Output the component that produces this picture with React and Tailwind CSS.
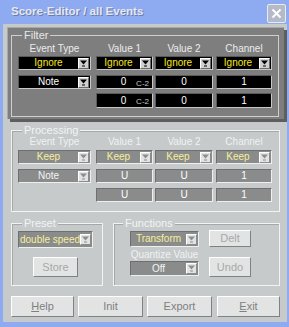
import React from 'react';

const font = "font-['Liberation_Sans',Arial,sans-serif]";

// column widths / gaps shared by the two grids
const cols = ['w-[73px]', 'ml-[5px] w-[57px]', 'ml-[2px] w-[58px]', 'ml-[3px] w-[56px]'];

function Arrow({ dim }) {
  return (
    <span
      className={
        dim
          ? 'mr-[1px] flex h-[11px] w-[11px] shrink-0 items-center justify-center border border-t-white border-l-white border-b-[#8a8c8c] border-r-[#8a8c8c] bg-[#e2e4e4]'
          : 'mr-[1px] flex h-[11px] w-[11px] shrink-0 items-center justify-center border border-t-white border-l-white border-b-[#6a6a6a] border-r-[#6a6a6a] bg-[#d0d0d0]'
      }
    >
      <svg width="7" height="7" viewBox="0 0 7 7">
        <path d="M0 0.5h7L3.5 4.5z" fill={dim ? '#8c8e8e' : '#000'} />
        <rect x="2" y="5.5" width="3" height="1" fill={dim ? '#8c8e8e' : '#000'} />
      </svg>
    </span>
  );
}

function Drop({ text, dark, yellow, left, h = 'h-[14px]' }) {
  const box = dark
    ? 'flex items-center bg-black border border-t-[#5a5a5a] border-l-[#5a5a5a] border-b-[#c8c8c8] border-r-[#c8c8c8]'
    : 'flex items-center bg-[#8a8c8c] border border-t-[#6e7070] border-l-[#6e7070] border-b-[#eef0f0] border-r-[#eef0f0]';
  const color = dark
    ? yellow ? 'text-[#f8e81c]' : 'text-white'
    : yellow ? 'text-[#f6ee9a]' : 'text-[#f2f4f4]';
  return (
    <div className={`${box} ${h}`}>
      <span
        className={`flex-1 whitespace-nowrap text-[10px] leading-none ${color} ${
          left ? 'pl-[1px] text-left' : 'text-center'
        }`}
      >
        {text}
      </span>
      <Arrow dim={!dark} />
    </div>
  );
}

function Num({ text, dark, note, h = 'h-[14px]' }) {
  const box = dark
    ? 'flex items-center bg-black border border-t-[#5a5a5a] border-l-[#5a5a5a] border-b-[#c8c8c8] border-r-[#c8c8c8]'
    : 'flex items-center bg-[#8a8c8c] border border-t-[#6e7070] border-l-[#6e7070] border-b-[#eef0f0] border-r-[#eef0f0]';
  return (
    <div className={`${box} ${h}`}>
      <span className={note ? 'flex-1 pl-[14px] text-center text-[10px] leading-none text-white' : 'flex-1 text-center text-[10px] leading-none text-white'}>
        {text}
      </span>
      {note && <span className="mr-[3px] mt-[3px] text-[8px] leading-none text-[#c8c8c8]">{note}</span>}
    </div>
  );
}

function Btn({ children, className, faint }) {
  return (
    <div
      className={`flex items-center justify-center border border-t-white border-l-white border-b-[#7e8282] border-r-[#7e8282] bg-[#e2e4e4] text-[11px] leading-none ${
        faint ? 'text-[#a6a8a8]' : 'text-[#7e8080]'
      } ${className}`}
    >
      {children}
    </div>
  );
}

function Group({ label, className, dark, children, legendX = 'left-[10px]' }) {
  return (
    <div
      className={`relative border ${
        dark ? 'border-[#cfcfcf]' : 'border-[#f2f4f4] shadow-[inset_1px_1px_0_#a4a8a8]'
      } ${className}`}
    >
      <span
        className={`absolute top-[-7px] ${legendX} px-[2px] text-[11px] leading-[12px] ${
          dark ? 'bg-[#7e7e7e] text-[#e8e8e8]' : 'bg-[#c6cacb] text-[#f2f4f4]'
        }`}
      >
        {label}
      </span>
      {children}
    </div>
  );
}

const headers = ['Event Type', 'Value 1', 'Value 2', 'Channel'];

function Header({ dark }) {
  return (
    <div className="flex h-[10px]">
      {headers.map((t, i) => (
        <div
          key={t}
          className={`${cols[i]} text-center text-[10px] leading-[10px] ${dark ? 'text-[#ececec]' : 'text-[#f0f2f2]'}`}
        >
          {t}
        </div>
      ))}
    </div>
  );
}

export default function App() {
  return (
    <div className={`flex h-[327px] w-[289px] flex-col bg-[#8eaaf0] pb-[5px] pl-[3px] pr-[2px] ${font}`}>
      {/* Title bar */}
      <div className="flex h-[24px] items-center justify-between pl-[8px] pr-[1px]">
        <span className="text-[11.5px] font-bold text-[#e4e8f2] [text-shadow:1px_1px_0_#6c7ca8]">
          Score-Editor / all Events
        </span>
        <div className="mt-[2px] flex h-[19px] w-[19px] items-center justify-center rounded-[2px] border border-[#e8ecf4] bg-[#b4bac8]">
          <svg width="11" height="11" viewBox="0 0 11 11">
            <path d="M1.5 1.5l8 8M9.5 1.5l-8 8" stroke="#fff" strokeWidth="2" />
          </svg>
        </div>
      </div>

      {/* Body */}
      <div className="flex flex-1 flex-col bg-[#c6cacb]">
        {/* Filter panel */}
        <div className="ml-[4px] mt-[3px] h-[92px] w-[277px] border-t border-l border-[#a8a8a8] bg-[#7e7e7e] pl-[3px] pt-[7px] shadow-[3px_3px_0_#5e5e5e]">
          <Group label="Filter" dark className="h-[82px] w-[268px]">
            <div className="pl-[6px] pt-[8px]">
              <Header dark />
              <div className="mt-[2px] flex">
                <div className={cols[0]}><Drop dark yellow text="Ignore" /></div>
                <div className={cols[1]}><Drop dark yellow text="Ignore" /></div>
                <div className={cols[2]}><Drop dark yellow text="Ignore" /></div>
                <div className={cols[3]}><Drop dark yellow text="Ignore" /></div>
              </div>
              <div className="mt-[5px] flex">
                <div className={cols[0]}><Drop dark text="Note" /></div>
                <div className={cols[1]}><Num dark text="0" note="C-2" /></div>
                <div className={cols[2]}><Num dark text="0" /></div>
                <div className={cols[3]}><Num dark text="1" /></div>
              </div>
              <div className="mt-[4px] flex">
                <div className={cols[0]} />
                <div className={cols[1]}><Num dark text="0" note="C-2" h="h-[15px]" /></div>
                <div className={cols[2]}><Num dark text="0" h="h-[15px]" /></div>
                <div className={cols[3]}><Num dark text="1" h="h-[15px]" /></div>
              </div>
            </div>
          </Group>
        </div>

        {/* Processing */}
        <Group label="Processing" className="ml-[8px] mt-[11px] h-[82px] w-[269px]">
          <div className="pl-[6px] pt-[6px]">
            <Header />
            <div className="mt-[3px] flex">
              <div className={cols[0]}><Drop yellow text="Keep" /></div>
              <div className={cols[1]}><Drop yellow text="Keep" /></div>
              <div className={cols[2]}><Drop yellow text="Keep" /></div>
              <div className={cols[3]}><Drop yellow text="Keep" /></div>
            </div>
            <div className="mt-[5px] flex">
              <div className={cols[0]}><Drop text="Note" /></div>
              <div className={cols[1]}><Num text="U" /></div>
              <div className={cols[2]}><Num text="U" /></div>
              <div className={cols[3]}><Num text="1" /></div>
            </div>
            <div className="mt-[5px] flex">
              <div className={cols[0]} />
              <div className={cols[1]}><Num text="U" /></div>
              <div className={cols[2]}><Num text="U" /></div>
              <div className={cols[3]}><Num text="1" /></div>
            </div>
          </div>
        </Group>

        {/* Preset + Functions */}
        <div className="ml-[8px] mt-[11px] flex">
          <Group label="Preset" className="h-[63px] w-[92px]">
            <div className="pl-[6px] pt-[7px]">
              <div className="w-[75px]">
                <Drop yellow left text="double speed" h="h-[17px]" />
              </div>
              <Btn faint className="ml-[15px] mt-[9px] h-[20px] w-[45px]">Store</Btn>
            </div>
          </Group>
          <Group label="Functions" legendX="left-[9px]" className="ml-[10px] h-[63px] w-[167px]">
            <div className="flex pl-[16px] pt-[6px]">
              <div className="flex w-[69px] flex-col">
                <div className="mt-[1px]"><Drop yellow text="Transform" h="h-[16px]" /></div>
                <div className="mt-[2px] h-[12px] whitespace-nowrap text-center text-[10px] leading-[12px] text-[#f0f2f2]">
                  Quantize Value
                </div>
                <Drop text="Off" h="h-[15px]" />
              </div>
              <div className="ml-[10px] flex flex-col">
                <Btn faint className="h-[17px] w-[42px]">Delt</Btn>
                <Btn faint className="mt-[10px] h-[20px] w-[42px]">Undo</Btn>
              </div>
            </div>
          </Group>
        </div>

        {/* Bottom buttons */}
        <div className="ml-[8px] mt-[10px] flex">
          <Btn className="h-[21px] w-[63px]"><span className="underline">H</span>elp</Btn>
          <Btn className="ml-[4px] h-[21px] w-[65px]">Init</Btn>
          <Btn className="ml-[4px] h-[21px] w-[65px]">Export</Btn>
          <Btn className="ml-[5px] h-[21px] w-[63px] text-[#6e7070]"><span className="underline">E</span>xit</Btn>
        </div>
      </div>
    </div>
  );
}
